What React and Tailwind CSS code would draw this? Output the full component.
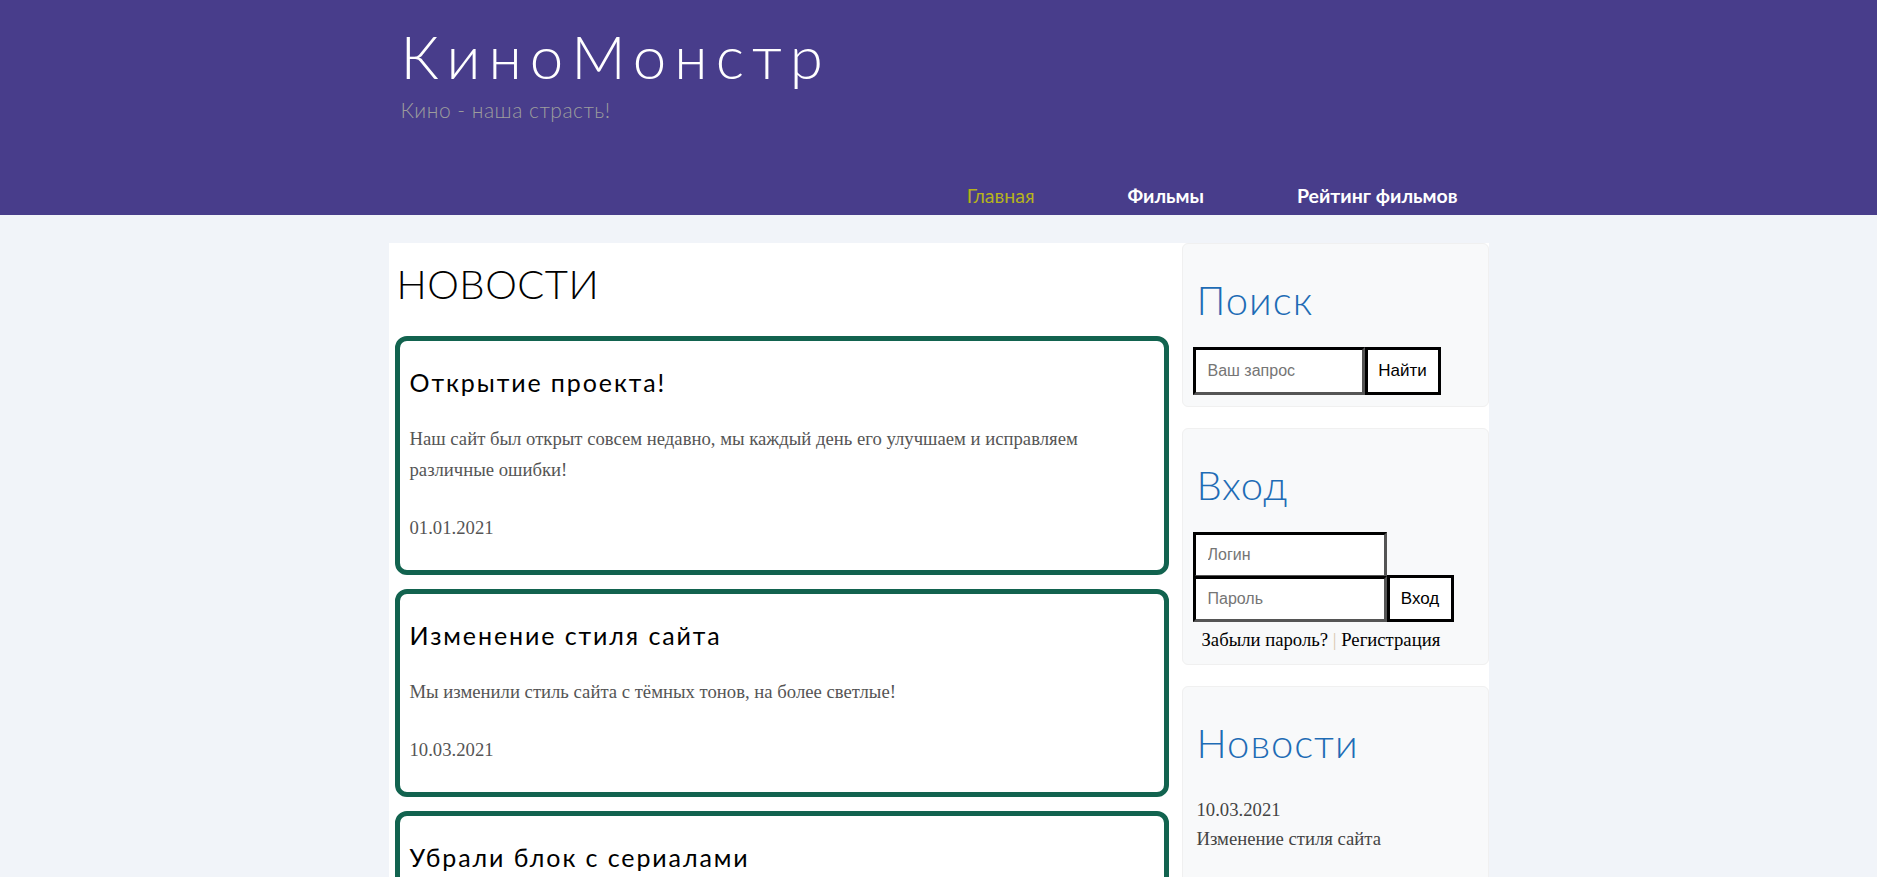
import React from "react";

const gothic = { fontFamily: '"Lato", "Open Sans", sans-serif' };

function NewsCard({ title, lines, date }) {
  return (
    <div className="border-[5px] border-[#12634f] rounded-[12px] px-[10px] pt-[27px] pb-[27px] bg-white">
      <h3 className="text-[25px] leading-[29px] text-black font-normal tracking-[1.9px]" style={gothic}>
        {title}
      </h3>
      <p className="mt-[26px] text-[18.7px] leading-[31px] text-[#555]" style={{ fontFamily: '"Liberation Serif", serif' }}>
        {lines}
      </p>
      <p className="mt-[27px] text-[18.7px] leading-[31px] text-[#555]" style={{ fontFamily: '"Liberation Serif", serif' }}>
        {date}
      </p>
    </div>
  );
}

function Panel({ title, children, className = "" }) {
  return (
    <div className={"bg-[#f8f9fa] rounded-[6px] border border-[#f0f0f0] px-[10px] pt-[32px] " + className}>
      <h2 className="text-[40px] leading-[48px] text-[#1e6cb5] font-light pl-[4px] tracking-[1px]" style={gothic}>
        {title}
      </h2>
      {children}
    </div>
  );
}

export default function App() {
  const sans = { fontFamily: '"Liberation Sans", Arial, sans-serif' };
  const serif = { fontFamily: '"Liberation Serif", serif' };
  return (
    <div className="min-h-[1100px] bg-[#f1f4f9]">
      <header className="bg-[#483d8b] h-[215px]">
        <div className="w-[1100px] mx-auto h-full flex flex-col">
          <div className="pl-[12px] pt-[26px]">
            <h1 className="text-[60px] leading-[60px] text-white font-light tracking-[8px]" style={gothic}>
              КиноМонстр
            </h1>
            <div className="mt-[13px] text-[21px] leading-[21px] text-[#9d9d9d] font-light tracking-[0.5px]" style={gothic}>
              Кино - наша страсть!
            </div>
          </div>
          <nav className="mt-auto h-[38px] flex items-center justify-end pr-[31px] gap-[93px] text-[19.5px]" style={gothic}>
            <a className="text-[#b5b31b] font-normal">Главная</a>
            <a className="text-white font-bold">Фильмы</a>
            <a className="text-white font-bold">Рейтинг фильмов</a>
          </nav>
        </div>
      </header>

      <div className="pt-[28px]">
        <div className="w-[1100px] mx-auto bg-white flex gap-[7px] items-start min-h-[800px]">
          <main className="w-[786px] px-[6px]">
            <h1 className="mt-[17px] text-[40px] leading-[48px] text-black font-light pl-[2px] tracking-[0.5px]" style={gothic}>
              НОВОСТИ
            </h1>
            <div className="mt-[28px] flex flex-col gap-[14px]">
              <NewsCard
                title="Открытие проекта!"
                lines={
                  <>
                    Наш сайт был открыт совсем недавно, мы каждый день его улучшаем и исправляем
                    <br />
                    различные ошибки!
                  </>
                }
                date="01.01.2021"
              />
              <NewsCard
                title="Изменение стиля сайта"
                lines="Мы изменили стиль сайта с тёмных тонов, на более светлые!"
                date="10.03.2021"
              />
              <NewsCard
                title="Убрали блок с сериалами"
                lines="Мы убрали блок с сериалами, так как он не пользовался популярностью."
                date="15.03.2021"
              />
            </div>
          </main>

          <aside className="w-[307px] flex flex-col gap-[21px]">
            <Panel title="Поиск" className="pb-[11px]">
              <div className="mt-[23px] flex">
                <input
                  placeholder="Ваш запрос"
                  className="w-[172px] h-[48px] border-[3px] border-t-black border-l-black border-b-[#555] border-r-[#555] bg-white pl-[12px] text-[16px] placeholder:text-[#757575] outline-none"
                  style={sans}
                />
                <button
                  className="w-[76px] h-[48px] border-[3px] border-black bg-white text-[17px] text-black"
                  style={sans}
                >
                  Найти
                </button>
              </div>
            </Panel>

            <Panel title="Вход" className="pb-[13px]">
              <div className="mt-[23px] flex flex-col">
                <input
                  placeholder="Логин"
                  className="w-[194px] h-[46px] border-[3px] border-t-black border-l-black border-b-[#555] border-r-[#555] bg-white pl-[12px] text-[16px] placeholder:text-[#757575] outline-none"
                  style={sans}
                />
                <div className="flex items-end -mt-[3px]">
                  <input
                    placeholder="Пароль"
                    className="w-[194px] h-[46px] border-[3px] border-t-black border-l-black border-b-[#555] border-r-[#555] bg-white pl-[12px] text-[16px] placeholder:text-[#757575] outline-none"
                    style={sans}
                  />
                  <button
                    className="w-[67px] h-[47px] border-[3px] border-black bg-white text-[17px] text-black"
                    style={sans}
                  >
                    Вход
                  </button>
                </div>
              </div>
              <div className="mt-[7px] pl-[9px] text-[18.7px] leading-[22px] text-black" style={serif}>
                <a>Забыли пароль?</a> <span className="text-[#d8c8b0]">|</span> <a>Регистрация</a>
              </div>
            </Panel>

            <Panel title="Новости" className="pb-[40px]">
              <div className="mt-[28px] pl-[4px] text-[18.7px] leading-[29px] text-[#444]" style={serif}>
                <div>10.03.2021</div>
                <div>Изменение стиля сайта</div>
              </div>
            </Panel>
          </aside>
        </div>
      </div>
    </div>
  );
}
